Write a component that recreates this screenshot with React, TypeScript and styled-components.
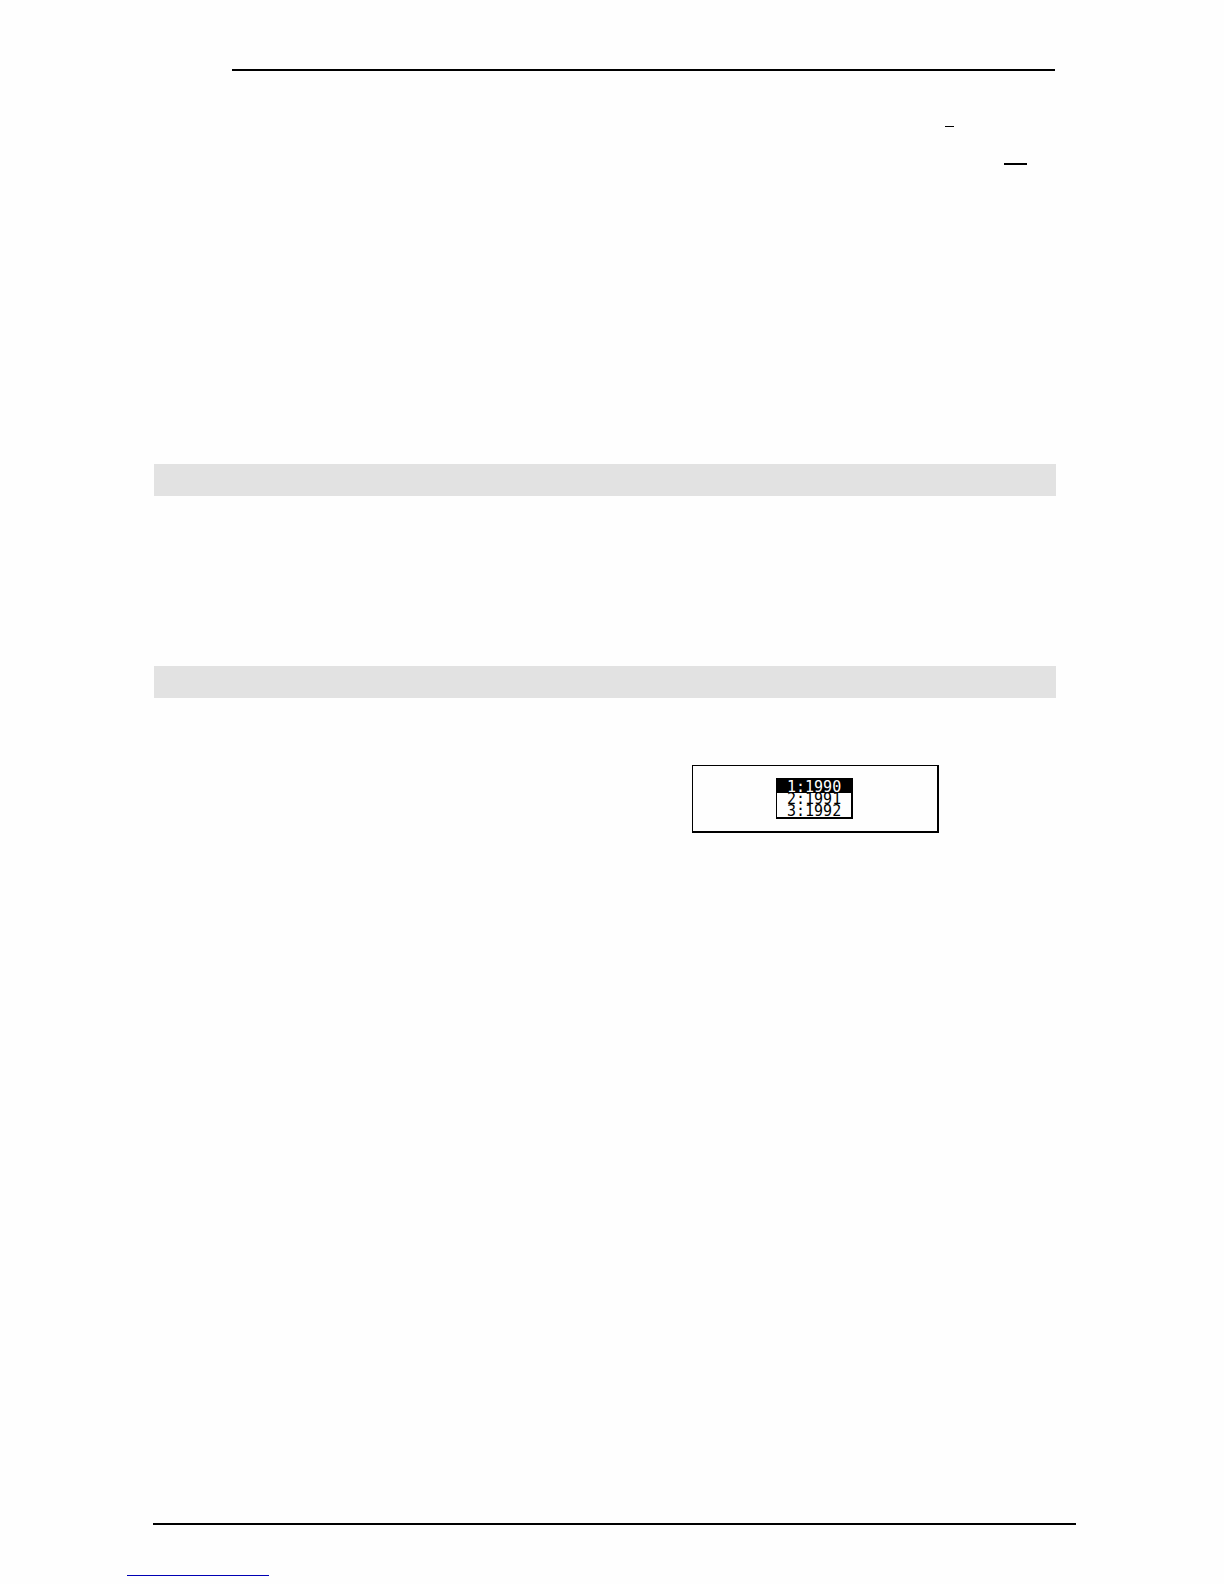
import React, { useState } from "react";
import styled, { createGlobalStyle } from "styled-components";

const GlobalStyle = createGlobalStyle`
  *, *::before, *::after { box-sizing: border-box; }
  body { margin: 0; background: #fefefe; }
`;

const Page = styled.div`
  display: flex;
  flex-direction: column;
  padding: 69px 0 8px;
  font-family: "DejaVu Sans Mono", "Liberation Mono", monospace;
`;

const Main = styled.main`
  display: flex;
  flex-direction: column;
  padding: 0 168px 0 154px;
`;

const Rule = styled.hr`
  width: 100%;
  height: 2px;
  margin: 0;
  border: 0;
  background: #000;
`;

const Header = styled.header`
  padding: 0 1px 0 78px;
`;

const Intro = styled.section`
  display: flex;
  flex-direction: column;
  align-items: flex-end;
  gap: 36px;
  height: 393px;
  padding: 55px 29px 0 0;
`;

const Mark = styled.span<{ $length: number; $weight: number; $inset?: number }>`
  width: ${(p) => p.$length}px;
  height: ${(p) => p.$weight}px;
  margin-right: ${(p) => p.$inset ?? 0}px;
  background: #000;
`;

const Band = styled.div`
  height: 32px;
  background: #e2e2e2;
`;

const Section = styled.section<{ $height: number }>`
  display: flex;
  justify-content: flex-end;
  align-items: flex-start;
  height: ${(p) => p.$height}px;
  padding: 67px 117px 0 0;
`;

const Display = styled.div`
  display: flex;
  width: 247px;
  height: 68px;
  padding: 12px 0 0 83px;
  border: solid #000;
  border-width: 1px 2px 2px 1px;
`;

const Menu = styled.ul`
  display: flex;
  flex-direction: column;
  width: 77px;
  height: 41px;
  margin: 0;
  padding: 0;
  list-style: none;
  border: solid #000;
  border-width: 0 2px 2px 1px;
`;

const MenuItem = styled.button<{ $selected: boolean }>`
  display: block;
  width: 100%;
  height: ${(p) => (p.$selected ? 15 : 12)}px;
  padding: ${(p) => (p.$selected ? 3 : 0)}px 0 0 10px;
  border: 0;
  text-align: left;
  font-family: inherit;
  font-size: 15px;
  line-height: 12px;
  color: ${(p) => (p.$selected ? "#fff" : "#000")};
  background: ${(p) => (p.$selected ? "#000" : "transparent")};
`;

const Footer = styled.footer`
  display: flex;
  flex-direction: column;
  gap: 50px;
  padding: 0 148px 0 127px;
`;

const FooterTop = styled.div`
  padding-left: 26px;
`;

const LinkLine = styled.span`
  width: 142px;
  height: 1px;
  background: #0000b4;
`;

const years = ["1990", "1991", "1992"];

export default function App() {
  const [selected, setSelected] = useState(0);

  return (
    <>
      <GlobalStyle />
      <Page>
        <Main>
          <Header>
            <Rule />
          </Header>
          <Intro>
            <Mark $length={9} $weight={1} $inset={73} />
            <Mark $length={23} $weight={2} />
          </Intro>
          <Band />
          <Section $height={170} />
          <Band />
          <Section $height={825}>
            <Display>
              <Menu>
                {years.map((year, i) => (
                  <li key={year}>
                    <MenuItem
                      type="button"
                      $selected={i === selected}
                      onClick={() => setSelected(i)}
                    >
                      {`${i + 1}:${year}`}
                    </MenuItem>
                  </li>
                ))}
              </Menu>
            </Display>
          </Section>
        </Main>
        <Footer>
          <FooterTop>
            <Rule />
          </FooterTop>
          <LinkLine />
        </Footer>
      </Page>
    </>
  );
}
